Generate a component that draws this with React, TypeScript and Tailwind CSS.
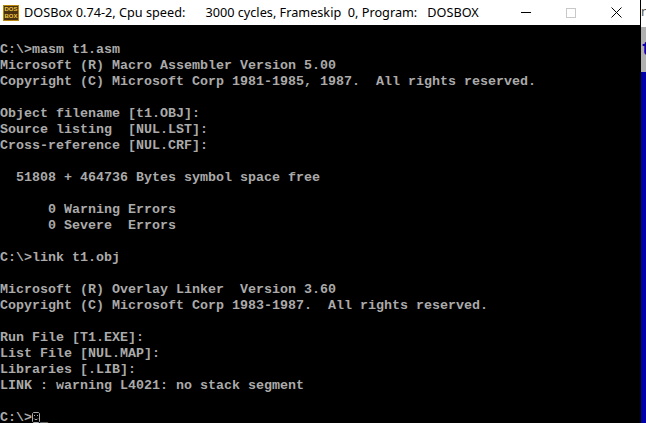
const output = `C:\\>masm t1.asm
Microsoft (R) Macro Assembler Version 5.00
Copyright (C) Microsoft Corp 1981-1985, 1987.  All rights reserved.

Object filename [t1.OBJ]:
Source listing  [NUL.LST]:
Cross-reference [NUL.CRF]:

  51808 + 464736 Bytes symbol space free

      0 Warning Errors
      0 Severe  Errors

C:\\>link t1.obj

Microsoft (R) Overlay Linker  Version 3.60
Copyright (C) Microsoft Corp 1983-1987.  All rights reserved.

Run File [T1.EXE]:
List File [NUL.MAP]:
Libraries [.LIB]:
LINK : warning L4021: no stack segment

C:\\>`;

function DosIcon() {
  return (
    <div className="w-4 h-4 bg-[#4a3210] border border-[#b8860b] flex flex-col items-center justify-center text-[#f0c840] text-[6px] leading-[7px] font-bold font-['Liberation_Sans',sans-serif]">
      <span>DOS</span>
      <span>BOX</span>
    </div>
  );
}

// the cp437 smiley, VGA shape is boxier than any installed font's
function Smiley() {
  return (
    <svg width="8" height="11" viewBox="0 0 8 11" className="inline-block align-[-2px]">
      <path d="M1.5 .5H6.5L7.5 1.5V9.5L6.5 10.5H1.5L.5 9.5V1.5Z" stroke="#aaaaaa" fill="none" />
      <path d="M2 3.5H3M5 3.5H6M2 6.5L3 7.5H5L6 6.5" stroke="#aaaaaa" fill="none" />
    </svg>
  );
}

export default function App() {
  return (
    <div className="w-[646px] h-[423px] overflow-hidden flex bg-white">
      <div className="w-[640px] flex flex-col">
        <div className="h-[25px] shrink-0 bg-white flex items-center pl-[3px] text-[12.7px] text-black font-['Noto_Sans',sans-serif]">
          <DosIcon />
          <span className="ml-[5px] whitespace-pre">DOSBox 0.74-2, Cpu speed:</span>
          <span className="ml-[20px] whitespace-pre">3000 cycles, Frameskip  0, Program:</span>
          <span className="ml-[10px] whitespace-pre">DOSBOX</span>
          <div className="ml-auto flex items-center">
            <div className="w-[10px] h-px bg-black mr-[35px]" />
            <div className="w-[10px] h-[10px] border border-[#c8c8c8] mr-[35px]" />
            <svg width="11" height="11" viewBox="0 0 11 11" className="mr-[18px]">
              <path d="M0.5 0.5L10.5 10.5M10.5 0.5L0.5 10.5" stroke="#000" fill="none" />
            </svg>
          </div>
        </div>
        <pre className="flex-1 bg-black pt-[17px] text-[#aaaaaa] text-[13.33px] leading-4 font-bold font-['Liberation_Mono',monospace] overflow-hidden">
          {output}
          <Smiley />
          _
        </pre>
      </div>
      <div className="w-px bg-black" />
      <div className="flex-1 flex flex-col overflow-hidden">
        <div className="h-[27px] bg-white text-[13px] leading-[22px] text-[#555555] font-['Noto_Sans',sans-serif]">n</div>
        <div className="h-[45px] bg-[#b0b0b0] flex items-center text-[#0000aa] text-[20px] leading-none font-bold font-['Liberation_Mono',monospace]">
          t
        </div>
        <div className="flex-1 bg-[#0000aa]" />
      </div>
    </div>
  );
}
